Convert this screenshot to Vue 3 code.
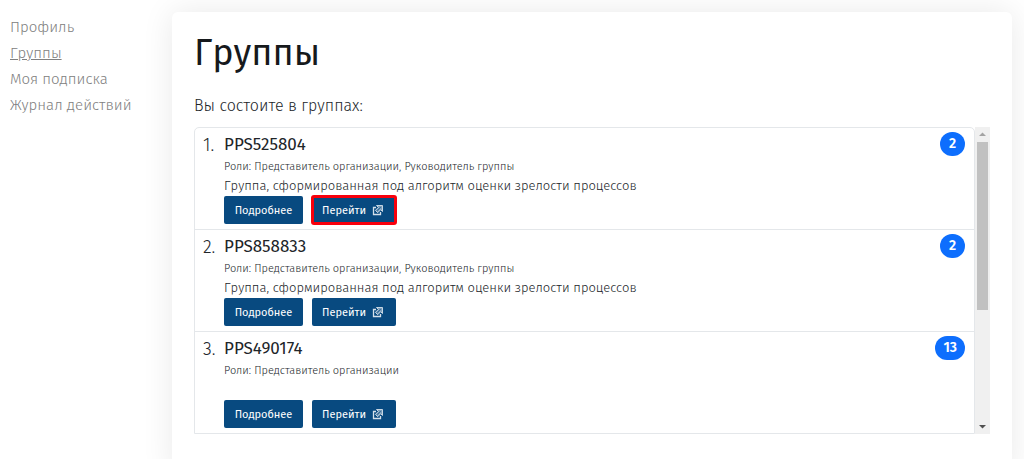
<script setup>
const links = [
  { text: 'Профиль', active: false },
  { text: 'Группы', active: true },
  { text: 'Моя подписка', active: false },
  { text: 'Журнал действий', active: false }
]

const about = 'Группа, сформированная под алгоритм оценки зрелости процессов'

const groups = [
  { name: 'PPS525804', roles: 'Представитель организации, Руководитель группы', about, count: 2, marked: true },
  { name: 'PPS858833', roles: 'Представитель организации, Руководитель группы', about, count: 2, marked: false },
  { name: 'PPS490174', roles: 'Представитель организации', about: '', count: 13, marked: false }
]
</script>

<template>
  <div class="page">
    <nav class="side">
      <a v-for="l in links" :key="l.text" href="#" :class="{ active: l.active }">{{ l.text }}</a>
    </nav>
    <main class="card">
      <h1>Группы</h1>
      <p class="lead">Вы состоите в группах:</p>
      <div class="scroller">
        <ol class="groups">
          <li v-for="(g, i) in groups" :key="g.name">
            <span class="num">{{ i + 1 }}.</span>
            <div class="body">
              <h2>{{ g.name }}</h2>
              <p class="roles">Роли: {{ g.roles }}</p>
              <p class="about">{{ g.about }}</p>
              <div class="actions">
                <button type="button">Подробнее</button>
                <button type="button" :class="{ marked: g.marked }">
                  Перейти
                  <svg viewBox="0 0 11 11" width="11" height="11" aria-hidden="true">
                    <path d="M4 2.500H1.500v7h7V7" fill="none" stroke="currentColor" stroke-width="1.300" />
                    <path d="M4.500 .5h6v6L8.700 4.700 5.700 7.700 3.400 5.400l3-3z" fill="currentColor" fill-opacity=".55" stroke="currentColor" stroke-width=".9" />
                    <path d="M5 5.800l3.600-3.600" fill="none" stroke="#084a80" stroke-width=".8" />
                  </svg>
                </button>
              </div>
            </div>
            <span class="badge">{{ g.count }}</span>
          </li>
        </ol>
        <div class="bar" aria-hidden="true">
          <svg class="up" viewBox="0 0 15 15" width="15" height="15"><path d="M4 9h7L7.500 5.500z" fill="#a3a3a3" /></svg>
          <div class="thumb"></div>
          <svg class="down" viewBox="0 0 15 15" width="15" height="15"><path d="M4 6h7L7.500 9.500z" fill="#505050" /></svg>
        </div>
      </div>
    </main>
  </div>
</template>

<style>
body {
  background: #fff;
}
html {
  overflow: hidden;
}
</style>

<style scoped>
.page {
  display: flex;
  align-items: stretch;
  min-height: 100vh;
  box-sizing: border-box;
  padding: 12px 12px 0 10px;
  font-family: "Fira Sans", "Noto Sans", "Open Sans", sans-serif;
  font-weight: 300;
  font-size: 15px;
  color: #212529;
}
h1, h2, p, ol {
  margin: 0;
  padding: 0;
}
.side {
  display: flex;
  flex-direction: column;
  flex: 0 0 162px;
  padding-top: 2px;
}
.side a {
  line-height: 26px;
  color: #808080;
  text-decoration: none;
  white-space: nowrap;
}
.side a.active {
  text-decoration: underline;
}
.card {
  flex: 1;
  min-width: 0;
  padding: 16px 22px 40px;
  border-radius: 6px;
  background: #fff;
  box-shadow: 0 0 32px rgba(0, 0, 0, 0.09);
}
h1 {
  font-size: 36px;
  font-weight: 400;
  line-height: 50px;
  color: #16191c;
}
.lead {
  margin-top: 16px;
  font-size: 16px;
  line-height: 24px;
}
.scroller {
  display: flex;
  margin-top: 9px;
}
.groups {
  flex: 1;
  min-width: 0;
  list-style: none;
  border: 1px solid #e4e7ea;
  border-radius: 5px 5px 0 0;
}
.groups li {
  display: flex;
  align-items: flex-start;
  padding: 4px 9px 5px 8px;
}
.groups li + li {
  border-top: 1px solid #e4e7ea;
}
.num {
  width: 21px;
  font-size: 18px;
  line-height: 26px;
}
.body {
  flex: 1;
  min-width: 0;
}
h2 {
  font-size: 17px;
  font-weight: 400;
  line-height: 26px;
}
.roles {
  font-size: 11px;
  line-height: 18px;
}
.about {
  font-size: 13px;
  line-height: 20px;
  min-height: 20px;
}
.actions {
  display: flex;
  gap: 9px;
}
button {
  display: flex;
  align-items: center;
  justify-content: center;
  gap: 6px;
  min-width: 79px;
  height: 28px;
  padding: 0 10px;
  border: 0;
  border-radius: 2px;
  background: #084a80;
  color: #fff;
  font: inherit;
  font-size: 11px;
  font-weight: 400;
  white-space: nowrap;
}
button svg {
  margin-right: 3px;
  color: #d5e0ea;
}
button.marked {
  outline: 3px solid #f8000c;
  outline-offset: -2px;
}
.badge {
  min-width: 25px;
  box-sizing: border-box;
  padding: 0 8px;
  border-radius: 12px;
  background: #0d6efd;
  color: #fff;
  font-size: 14px;
  font-weight: 600;
  line-height: 24px;
  text-align: center;
}
.bar {
  display: flex;
  flex-direction: column;
  flex: 0 0 15px;
  background: #f0f0f0;
}
.thumb {
  flex: 0 0 168px;
  margin: 0 2px;
  background: #c1c1c1;
}
.bar svg {
  display: block;
}
.down {
  margin-top: auto;
}
</style>
